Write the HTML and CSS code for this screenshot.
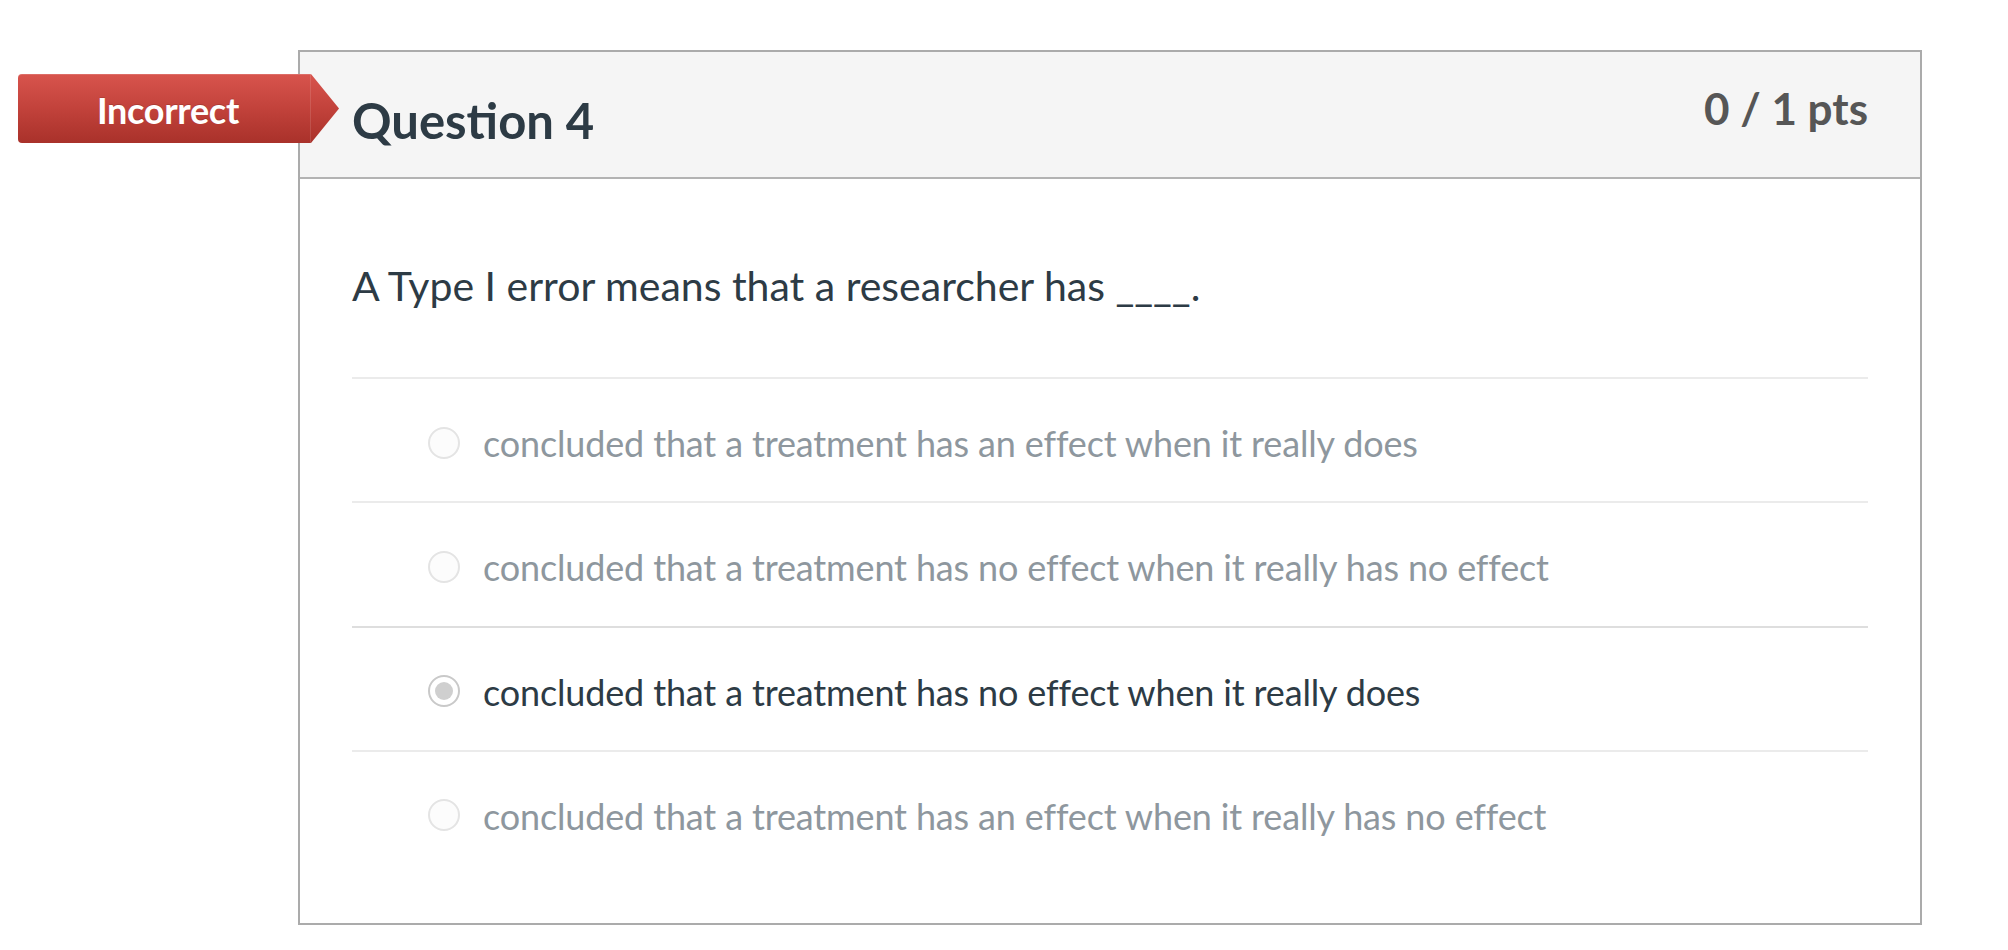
FILE: index.html
```html
<!DOCTYPE html>
<html lang="en">
<head>
<meta charset="utf-8">
<title>Question 4</title>
<link rel="stylesheet" href="styles.css">
</head>
<body>
<div class="page">
  <div class="card">
    <div class="badge"><span class="badge-text">Incorrect</span></div>
    <div class="card-header">
      <h2 class="q-title">Question 4</h2>
      <div class="q-points">0 / 1 pts</div>
    </div>
    <div class="card-body">
      <p class="q-text">A Type I error means that a researcher has ____.</p>
      <div class="answers">
        <div class="answer">
          <span class="radio"></span>
          <span class="answer-text">concluded that a treatment has an effect when it really does</span>
        </div>
        <div class="answer">
          <span class="radio"></span>
          <span class="answer-text">concluded that a treatment has no effect when it really has no effect</span>
        </div>
        <div class="answer answer-selected">
          <span class="radio radio-checked"></span>
          <span class="answer-text">concluded that a treatment has no effect when it really does</span>
        </div>
        <div class="answer">
          <span class="radio"></span>
          <span class="answer-text">concluded that a treatment has an effect when it really has no effect</span>
        </div>
      </div>
    </div>
  </div>
</div>
</body>
</html>
```

FILE: styles.css
```css
* { box-sizing: border-box; }

html, body {
  margin: 0;
  padding: 0;
  background: #ffffff;
}

body {
  font-family: Lato, "Open Sans", "Liberation Sans", sans-serif;
  color: #2d3b45;
}

.page {
  padding: 50px 0 0 298px;
}

.card {
  position: relative;
  width: 1624px;
  height: 875px;
  border: 2px solid #ababab;
  background: #ffffff;
}

.badge {
  position: absolute;
  left: -282px;
  top: 22px;
  width: 321px;
  height: 69px;
  border-radius: 4px 0 0 4px;
  background: linear-gradient(to bottom, #d8544d 0%, #c2423b 50%, #a9312a 100%);
  clip-path: polygon(0 0, 293px 0, 321px 50%, 293px 100%, 0 100%);
  display: flex;
  align-items: center;
  box-shadow: inset 0 1px 0 rgba(255,255,255,0.15);
}

.badge::after {
  content: "";
  position: absolute;
  left: 292px;
  top: 0;
  width: 1px;
  height: 100%;
  background: rgba(255,255,255,0.12);
}

.badge-text {
  width: 293px;
  padding: 4px 0 0 7px;
  text-align: center;
  color: #ffffff;
  font-weight: 700;
  font-size: 36px;
  line-height: 1.2;
  letter-spacing: -0.3px;
  text-shadow: 0 -1px 0 rgba(0,0,0,0.15);
}

.card-header {
  height: 127px;
  background: #f5f5f5;
  border-bottom: 2px solid #b3b3b3;
  display: flex;
  justify-content: space-between;
  align-items: flex-start;
  padding: 0 52px;
}

.q-title {
  margin: 39px 0 0 0;
  font-size: 49px;
  line-height: 1.2;
  font-weight: 700;
  color: #2d3b45;
}

.q-points {
  margin-top: 30px;
  font-size: 44px;
  line-height: 1.2;
  font-weight: 700;
  color: #565656;
}

.card-body {
  padding: 82px 52px 0 52px;
}

.q-text {
  margin: 0 0 67px 0;
  font-size: 41px;
  line-height: 1.2;
  color: #2d3b45;
}

.answers {
  display: flex;
  flex-direction: column;
}

.answer {
  display: flex;
  align-items: center;
  gap: 23px;
  padding: 43px 0 36px 76px;
  border-top: 2px solid #ebebeb;
}

.answer-selected {
  border-top-color: #dedede;
}

.answer-text {
  font-size: 36px;
  line-height: 1.2;
  letter-spacing: -0.15px;
  color: #8e979e;
}

.answer-selected .answer-text {
  color: #2d3b45;
}

.radio {
  flex: none;
  width: 32px;
  height: 32px;
  border-radius: 50%;
  border: 2px solid #e4e4e4;
  background: #fcfcfc;
  position: relative;
  top: -1px;
}

.radio-checked {
  border-color: #c9c9c9;
  background: #ffffff;
}

.radio-checked::after {
  content: "";
  position: absolute;
  left: 5px;
  top: 5px;
  width: 18px;
  height: 18px;
  border-radius: 50%;
  background: #cfcfcf;
}
```
